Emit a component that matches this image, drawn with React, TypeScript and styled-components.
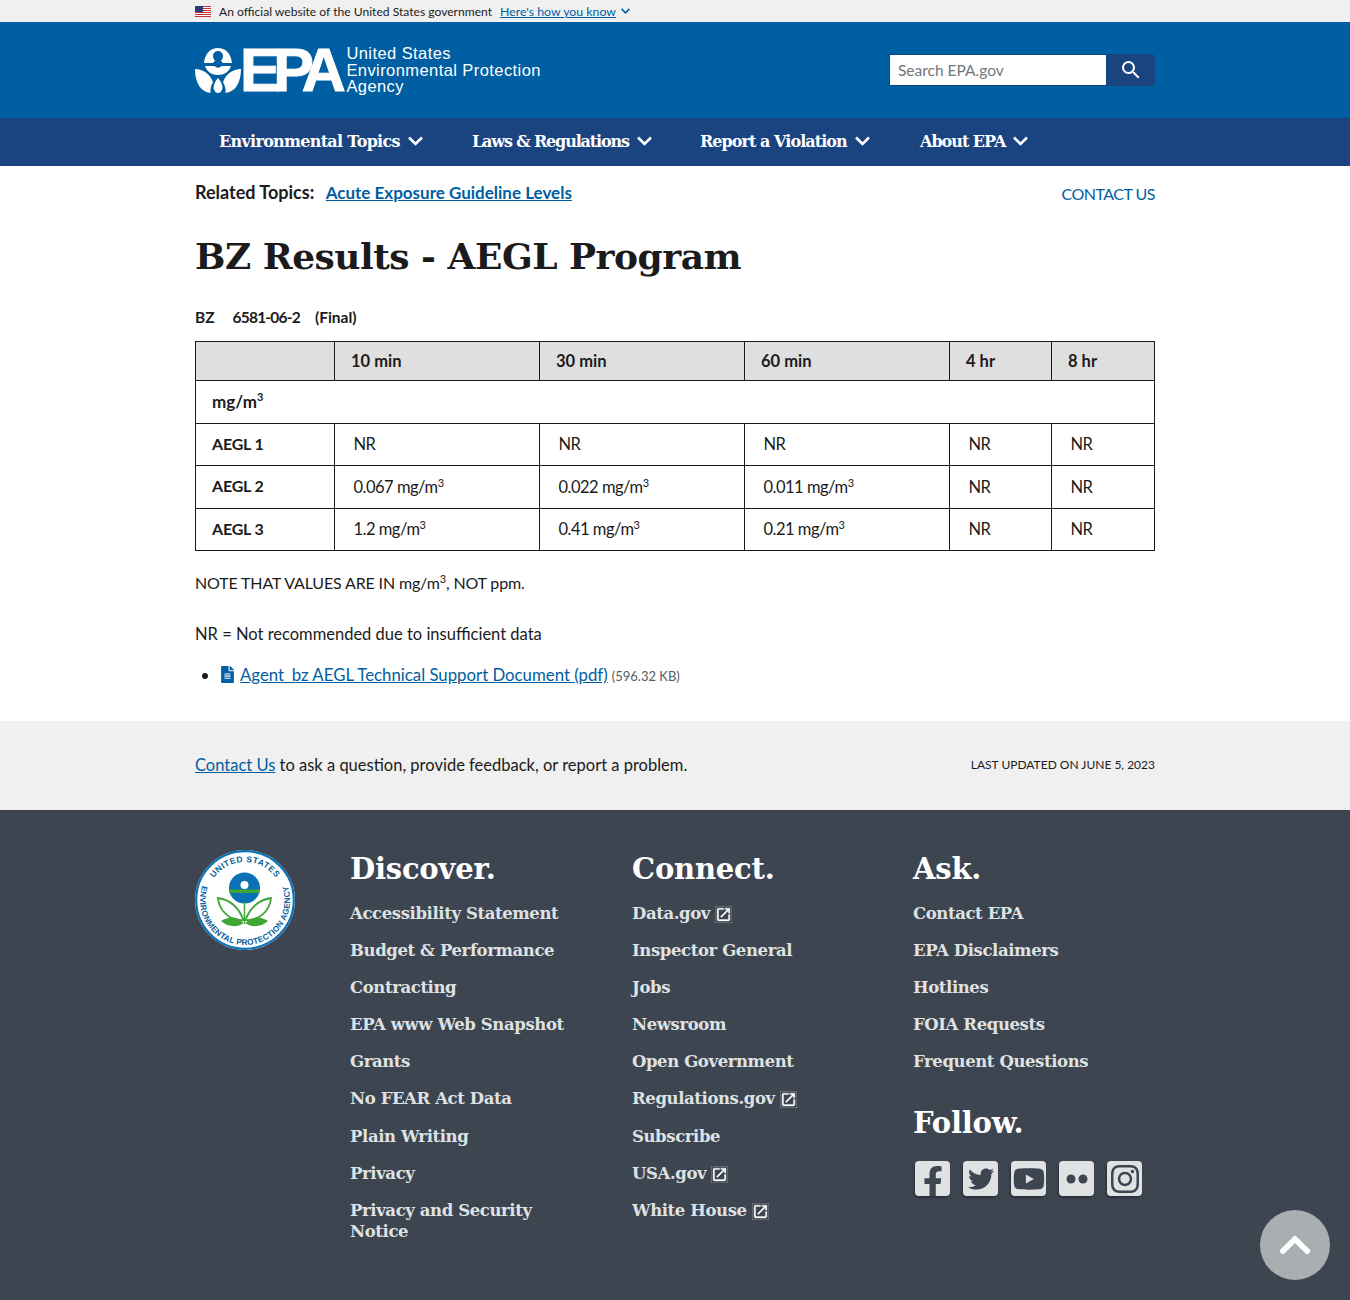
import React from "react";
import styled, { createGlobalStyle } from "styled-components";
import { FaFacebookF, FaTwitter, FaYoutube, FaInstagram, FaFileAlt, FaChevronUp } from "react-icons/fa";
import { MdOpenInNew, MdSearch } from "react-icons/md";

const sans = `"Lato", "Noto Sans", sans-serif`;
const serif = `"DejaVu Serif", "Liberation Serif", serif`;

const GlobalStyle = createGlobalStyle`
  html, body { margin: 0; padding: 0; background: #fff; }
  body { font-family: ${sans}; color: #1b1b1b; font-size: 16.5px; }
  a { color: #005ea2; }
`;

const Page = styled.div`
  position: relative;
  height: 1300px;
  overflow: hidden;
`;

const Wrap = styled.div`
  width: 960px;
  margin: 0 auto;
`;

const Banner = styled.div`
  height: 22px;
  background: #f0f0f0;
  font-size: 12.1px;
`;

const BannerRow = styled(Wrap)`
  display: flex;
  align-items: center;
  height: 22px;
`;

const BannerText = styled.span`
  margin-left: 8px;
`;

const BannerLink = styled.a`
  margin-left: 8px;
  font-size: 12.3px;
  text-decoration: underline;
`;

const BannerCaret = styled.a`
  margin-left: 5px;
  line-height: 0;
`;

const Masthead = styled.header`
  height: 96px;
  background: #005ea2;
`;

const MastRow = styled(Wrap)`
  display: flex;
  align-items: center;
  justify-content: space-between;
  height: 96px;
`;

const Logo = styled.div`
  display: flex;
  align-items: center;
  color: #fff;
`;

const LogoLetters = styled.span`
  font-family: "Liberation Sans", sans-serif;
  font-weight: 700;
  font-size: 61px;
  line-height: 50px;
  letter-spacing: -7.5px;
  margin-left: -1px;
  -webkit-text-stroke: 1px #fff;
`;

const LogoName = styled.span`
  font-family: "Liberation Sans", sans-serif;
  font-size: 16.5px;
  line-height: 16.5px;
  letter-spacing: 0.42px;
  margin-left: 8px;
`;

const SearchForm = styled.form`
  display: flex;
  width: 266px;
  height: 32px;
  margin: 0;
`;

const SearchInput = styled.input`
  flex: 1;
  min-width: 0;
  box-sizing: border-box;
  border: 1px solid #0b4778;
  background: #fff;
  padding: 0 8px;
  font-family: ${sans};
  font-size: 15.5px;
  &::placeholder { color: #71767a; opacity: 1; }
`;

const SearchButton = styled.button`
  width: 48px;
  display: flex;
  align-items: center;
  justify-content: center;
  border: 0;
  padding: 0;
  border-radius: 0 4px 4px 0;
  background: #1a4480;
  color: #fff;
`;

const Nav = styled.nav`
  height: 48px;
  background: #1a4480;
`;

const NavRow = styled(Wrap)`
  display: flex;
  align-items: center;
  height: 46px;
  padding-left: 24px;
  box-sizing: border-box;
`;

const NavItem = styled.div<{ $width: number; $track: number }>`
  display: flex;
  align-items: center;
  gap: 8px;
  width: ${(p) => p.$width}px;
  color: #fff;
  font-family: ${serif};
  font-weight: 700;
  font-size: 16px;
  letter-spacing: ${(p) => p.$track}px;
`;

const Main = styled(Wrap)`
  height: 555px;
  padding-top: 16px;
  box-sizing: border-box;
`;

const TopRow = styled.div`
  display: flex;
  justify-content: space-between;
  align-items: flex-start;
  height: 50px;
`;

const Related = styled.div`
  font-weight: 700;
  font-size: 18px;
  line-height: 20px;
`;

const RelatedLink = styled.a`
  margin-left: 7px;
  font-size: 17px;
`;

const ContactUs = styled.a`
  font-size: 16px;
  line-height: 24px;
  letter-spacing: -0.5px;
  text-decoration: none;
`;

const Title = styled.h1`
  margin: 0;
  height: 73px;
  font-family: ${serif};
  font-weight: 700;
  font-size: 36px;
  line-height: 48px;
  letter-spacing: -0.5px;
`;

const Chemical = styled.div`
  display: flex;
  font-size: 15.5px;
  font-weight: 700;
  line-height: 20px;
  margin-top: 2px;
  margin-bottom: 14px;
`;

const ChemicalCode = styled.span`
  margin: 0 15px 0 18px;
  letter-spacing: -0.8px;
`;

const Table = styled.table`
  width: 959px;
  table-layout: fixed;
  border-collapse: collapse;
  font-size: 16.5px;
`;

const Th = styled.th`
  height: 39px;
  padding: 0 16px;
  box-sizing: border-box;
  background: #dfdfdf;
  border: 1px solid #1b1b1b;
  text-align: left;
  font-weight: 700;
`;

const RowHead = styled.td`
  height: 42.5px;
  padding: 0 16px 2px;
  box-sizing: border-box;
  border: 1px solid #1b1b1b;
  font-size: 16px;
  font-weight: 700;
  letter-spacing: -0.2px;
`;

const UnitCell = styled(RowHead)`
  padding-bottom: 0;
  font-size: 17px;
  letter-spacing: 0;
`;

const Td = styled.td`
  height: 42.5px;
  padding: 0 18.5px;
  box-sizing: border-box;
  border: 1px solid #1b1b1b;
  letter-spacing: -0.5px;
`;

const Sup = styled.sup`
  font-size: 11px;
  line-height: 0;
`;

const Note = styled.p`
  margin: 20px 0 0;
  line-height: 24px;
`;

const Caps = styled(Note)`
  font-size: 16px;
  letter-spacing: -0.15px;
`;

const NoteNext = styled(Note)`
  margin-top: 27px;
`;

const Files = styled.ul`
  margin: 17px 0 0;
  padding-left: 25px;
  line-height: 24px;
  font-size: 16.8px;
`;

const FileItem = styled.li`
  & svg {
    color: #005ea2;
    vertical-align: -2px;
    margin: 0 4px 0 -1px;
  }
`;

const FileSize = styled.span`
  margin-left: 4px;
  font-size: 13px;
  color: #565c65;
`;

const Feedback = styled.div`
  height: 89px;
  background: #f0f0f0;
`;

const FeedbackRow = styled(Wrap)`
  display: flex;
  align-items: center;
  justify-content: space-between;
  height: 87px;
`;

const Updated = styled.span`
  font-size: 12px;
`;

const Footer = styled.footer`
  height: 490px;
  background: #3d4551;
  color: #fff;
`;

const FooterGrid = styled(Wrap)`
  display: grid;
  grid-template-columns: 155px 282px 281px 242px;
  padding-top: 40px;
`;

const ColHead = styled.h2<{ $follow?: boolean }>`
  margin: ${(p) => (p.$follow ? "33px" : "1px")} 0 ${(p) => (p.$follow ? "20px" : "16px")};
  font-family: ${serif};
  font-weight: 700;
  font-size: 29px;
  line-height: 36px;
  letter-spacing: -0.2px;
  color: #fff;
`;

const LinkList = styled.div`
  display: flex;
  flex-direction: column;
  gap: 16.1px;
`;

const FooterLink = styled.a`
  display: block;
  width: 225px;
  font-family: ${serif};
  font-weight: 700;
  font-size: 16.5px;
  line-height: 21px;
  letter-spacing: -0.4px;
  color: #dfe1e2;
  & svg {
    vertical-align: -4px;
    margin-left: 5px;
    stroke: currentColor;
    stroke-width: 0.5;
    color: #fff;
  }
`;

const Socials = styled.div`
  display: flex;
  gap: 13px;
  margin-left: 2px;
`;

const Tile = styled.div`
  position: relative;
  width: 35px;
  height: 35px;
  display: flex;
  align-items: center;
  justify-content: center;
  overflow: hidden;
  border-radius: 4px;
  background: #dfe1e2;
  color: #3d4551;
`;

const TileShadow = styled.div`
  border-radius: 4px;
  box-shadow: -1px 2px 2px rgba(0, 0, 0, 0.3);
`;

const FacebookGlyph = styled(FaFacebookF)`
  position: absolute;
  bottom: -2px;
  left: 2px;
`;

const ToTop = styled.a`
  position: absolute;
  left: 1260px;
  top: 1210px;
  width: 70px;
  height: 70px;
  display: flex;
  align-items: center;
  justify-content: center;
  border-radius: 50%;
  background: #a9aeb1;
  color: #fff;
`;

function Chevron({ size = 15 }: { size?: number }) {
  return (
    <svg width={size} height={size * 0.67} viewBox="0 0 15 10" fill="none" stroke="currentColor" strokeWidth="2.6">
      <path d="M1 1.5 7.5 8 14 1.5" />
    </svg>
  );
}

function Flag() {
  return (
    <svg width="16" height="11" viewBox="0 0 16 11">
      <rect width="16" height="11" fill="#fff" />
      {[0, 2, 4, 6, 8, 10].map((y) => (
        <rect key={y} y={y} width="16" height="1" fill="#c8312e" />
      ))}
      <rect width="8" height="6" fill="#2e3a7c" />
    </svg>
  );
}

function EpaMark() {
  return (
    <svg width="46" height="46" viewBox="0 0 46 46" fill="#fff">
      <path d="M9 16C10 6 16 1 23 1S36 6 37 16H28C27 15 26.500 14.500 26 13.500 27 12.500 28 11 28 9A5 5 0 0 0 18 9C18 11 19 12.500 20 13.500 19.500 14.500 19 15 18 16Z" />
      <path d="M10 19H19L23 21 27 19H36C34 25 29 28 23 28S12 25 10 19Z" />
      <path d="M0 22C8 22 15 27 18 35 16 39 15 42 15.500 46 6 45 0 36 0 22Z" />
      <path d="M46 22C38 22 31 27 28 35 30 39 31 42 30.500 46 40 45 46 36 46 22Z" />
      <path d="M23 31C20 34 18.500 38 18.500 41 19 44 21 46 23 46S27 44 27.500 41C27.500 38 26 34 23 31Z" />
    </svg>
  );
}

function Seal() {
  return (
    <svg width="100" height="100" viewBox="0 0 100 100">
      <circle cx="50" cy="50" r="50" fill="#fff" />
      <circle cx="50" cy="50" r="48.800" fill="none" stroke="#0a71b4" strokeWidth="2.200" />
      <defs>
        <path id="sealTop" d="M12 50A38 38 0 0 1 88 50" />
        <path id="sealBottom" d="M9.700 30A45 45 0 1 0 90.300 30" />
      </defs>
      <text fontFamily="Liberation Sans, sans-serif" fontSize="8.500" fontWeight="700" fill="#0a5f9c" letterSpacing="0.5">
        <textPath href="#sealTop" startOffset="50%" textAnchor="middle">UNITED STATES</textPath>
      </text>
      <text fontFamily="Liberation Sans, sans-serif" fontSize="8.200" fontWeight="700" fill="#0a5f9c" letterSpacing="0.2">
        <textPath href="#sealBottom" startOffset="50%" textAnchor="middle">ENVIRONMENTAL PROTECTION AGENCY</textPath>
      </text>
      <circle cx="49.500" cy="38" r="15.500" fill="#0a71b4" />
      <rect x="34.300" y="39.500" width="30.400" height="3.500" fill="#3fa535" />
      <circle cx="49.500" cy="35" r="4" fill="#fff" />
      <path d="M49.500 52V74" stroke="#3fa535" strokeWidth="1.500" />
      <path d="M48.500 70C44 58 36 50 23 48 24 60 34 71 48.500 70Z" fill="#fff" stroke="#3fa535" strokeWidth="1.800" />
      <path d="M50.500 70C55 58 63 50 76 48 75 60 65 71 50.500 70Z" fill="#fff" stroke="#3fa535" strokeWidth="1.800" />
      <path d="M48.500 73C42 66 34 66 26 71 33 77 42 78 48.500 73Z" fill="#3fa535" />
      <path d="M50.500 73C57 66 65 66 73 71 66 77 57 78 50.500 73Z" fill="#3fa535" />
    </svg>
  );
}

const FlickrDots = () => (
  <svg width="22" height="10" viewBox="0 0 22 10" fill="currentColor">
    <circle cx="5" cy="5" r="4.500" />
    <circle cx="17" cy="5" r="4.500" />
  </svg>
);

const rows = [
  ["AEGL 1", "NR", "NR", "NR"],
  ["AEGL 2", "0.067", "0.022", "0.011"],
  ["AEGL 3", "1.2", "0.41", "0.21"],
];

function Value({ value }: { value: string }) {
  if (value === "NR") return <>NR</>;
  return (
    <>
      {value} mg/m<Sup>3</Sup>
    </>
  );
}

function Ext() {
  return <MdOpenInNew size={17} />;
}

export default function App() {
  return (
    <Page>
      <GlobalStyle />
      <Banner>
        <BannerRow>
          <Flag />
          <BannerText>An official website of the United States government</BannerText>
          <BannerLink href="#">Here's how you know</BannerLink>
          <BannerCaret href="#">
            <Chevron size={9} />
          </BannerCaret>
        </BannerRow>
      </Banner>

      <Masthead>
        <MastRow>
          <Logo>
            <EpaMark />
            <LogoLetters>EPA</LogoLetters>
            <LogoName>
              United States
              <br />
              Environmental Protection
              <br />
              Agency
            </LogoName>
          </Logo>
          <SearchForm>
            <SearchInput placeholder="Search EPA.gov" />
            <SearchButton type="button" aria-label="Search">
              <MdSearch size={24} />
            </SearchButton>
          </SearchForm>
        </MastRow>
      </Masthead>

      <Nav>
        <NavRow>
          <NavItem $width={253} $track={-0.7}>Environmental Topics <Chevron /></NavItem>
          <NavItem $width={228} $track={-1.15}>Laws &amp; Regulations <Chevron /></NavItem>
          <NavItem $width={220} $track={-0.95}>Report a Violation <Chevron /></NavItem>
          <NavItem $width={200} $track={-1}>About EPA <Chevron /></NavItem>
        </NavRow>
      </Nav>

      <Main>
        <TopRow>
          <Related>
            Related Topics: <RelatedLink href="#">Acute Exposure Guideline Levels</RelatedLink>
          </Related>
          <ContactUs href="#">CONTACT US</ContactUs>
        </TopRow>
        <Title>BZ Results - AEGL Program</Title>
        <Chemical>
          <span>BZ</span>
          <ChemicalCode>6581-06-2</ChemicalCode>
          <span>(Final)</span>
        </Chemical>
        <Table>
          <colgroup>
            <col width="139" />
            <col width="205" />
            <col width="205" />
            <col width="205" />
            <col width="102" />
            <col width="103" />
          </colgroup>
          <thead>
            <tr>
              <Th />
              <Th>10 min</Th>
              <Th>30 min</Th>
              <Th>60 min</Th>
              <Th>4 hr</Th>
              <Th>8 hr</Th>
            </tr>
          </thead>
          <tbody>
            <tr>
              <UnitCell colSpan={6}>mg/m<Sup>3</Sup></UnitCell>
            </tr>
            {rows.map(([name, a, b, c]) => (
              <tr key={name}>
                <RowHead>{name}</RowHead>
                <Td><Value value={a} /></Td>
                <Td><Value value={b} /></Td>
                <Td><Value value={c} /></Td>
                <Td>NR</Td>
                <Td>NR</Td>
              </tr>
            ))}
          </tbody>
        </Table>
        <Caps>NOTE THAT VALUES ARE IN mg/m<Sup>3</Sup>, NOT ppm.</Caps>
        <NoteNext>NR = Not recommended due to insufficient data</NoteNext>
        <Files>
          <FileItem>
            <FaFileAlt size={17} />
            <a href="#">Agent_bz AEGL Technical Support Document (pdf)</a>
            <FileSize>(596.32 KB)</FileSize>
          </FileItem>
        </Files>
      </Main>

      <Feedback>
        <FeedbackRow>
          <span><a href="#">Contact Us</a> to ask a question, provide feedback, or report a problem.</span>
          <Updated>LAST UPDATED ON JUNE 5, 2023</Updated>
        </FeedbackRow>
      </Feedback>

      <Footer>
        <FooterGrid>
          <div><Seal /></div>
          <div>
            <ColHead>Discover.</ColHead>
            <LinkList>
              <FooterLink>Accessibility Statement</FooterLink>
              <FooterLink>Budget &amp; Performance</FooterLink>
              <FooterLink>Contracting</FooterLink>
              <FooterLink>EPA www Web Snapshot</FooterLink>
              <FooterLink>Grants</FooterLink>
              <FooterLink>No FEAR Act Data</FooterLink>
              <FooterLink>Plain Writing</FooterLink>
              <FooterLink>Privacy</FooterLink>
              <FooterLink>Privacy and Security Notice</FooterLink>
            </LinkList>
          </div>
          <div>
            <ColHead>Connect.</ColHead>
            <LinkList>
              <FooterLink>Data.gov<Ext /></FooterLink>
              <FooterLink>Inspector General</FooterLink>
              <FooterLink>Jobs</FooterLink>
              <FooterLink>Newsroom</FooterLink>
              <FooterLink>Open Government</FooterLink>
              <FooterLink>Regulations.gov<Ext /></FooterLink>
              <FooterLink>Subscribe</FooterLink>
              <FooterLink>USA.gov<Ext /></FooterLink>
              <FooterLink>White House<Ext /></FooterLink>
            </LinkList>
          </div>
          <div>
            <ColHead>Ask.</ColHead>
            <LinkList>
              <FooterLink>Contact EPA</FooterLink>
              <FooterLink>EPA Disclaimers</FooterLink>
              <FooterLink>Hotlines</FooterLink>
              <FooterLink>FOIA Requests</FooterLink>
              <FooterLink>Frequent Questions</FooterLink>
            </LinkList>
            <ColHead $follow>Follow.</ColHead>
            <Socials>
              <TileShadow><Tile><FacebookGlyph size={32} /></Tile></TileShadow>
              <TileShadow><Tile><FaTwitter size={26} /></Tile></TileShadow>
              <TileShadow><Tile><FaYoutube size={32} /></Tile></TileShadow>
              <TileShadow><Tile><FlickrDots /></Tile></TileShadow>
              <TileShadow><Tile><FaInstagram size={32} /></Tile></TileShadow>
            </Socials>
          </div>
        </FooterGrid>
      </Footer>

      <ToTop href="#" aria-label="Back to top">
        <FaChevronUp size={36} />
      </ToTop>
    </Page>
  );
}
